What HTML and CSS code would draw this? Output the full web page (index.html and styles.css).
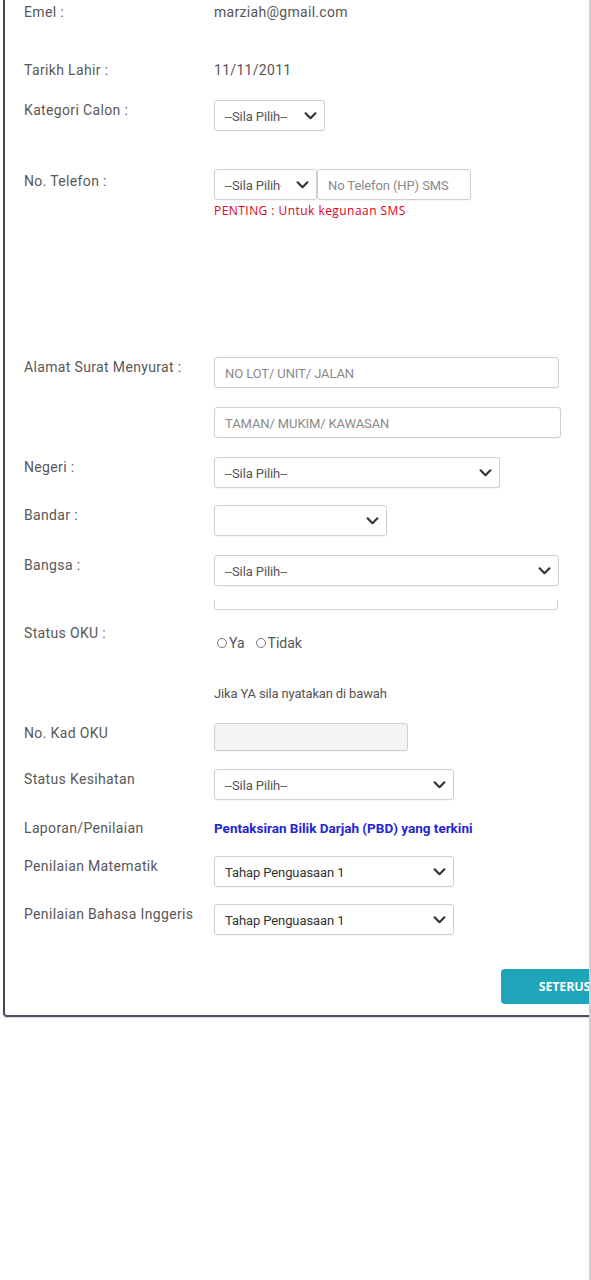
FILE: index.html
```html
<!DOCTYPE html>
<html lang="ms">
<head>
<meta charset="utf-8">
<title>Borang</title>
<link rel="stylesheet" href="styles.css">
</head>
<body>
<div class="viewport">
  <div class="card">
    <div class="row r-emel">
      <div class="label">Emel :</div>
      <div class="value text">marziah@gmail.com</div>
    </div>
    <div class="row r-tarikh">
      <div class="label">Tarikh Lahir :</div>
      <div class="value text">11/11/2011</div>
    </div>
    <div class="row r-kategori">
      <div class="label">Kategori Calon :</div>
      <div class="value">
        <div class="select w-kategori"><span>--Sila Pilih--</span><svg class="chev" viewBox="0 0 14 9"><polyline points="1.5,1.5 7,7 12.5,1.5"/></svg></div>
      </div>
    </div>
    <div class="row r-telefon">
      <div class="label lbl-down">No. Telefon :</div>
      <div class="value">
        <div class="phone">
          <div class="select w-kod"><span class="clip">--Sila Pilih--</span><svg class="chev" viewBox="0 0 14 9"><polyline points="1.5,1.5 7,7 12.5,1.5"/></svg></div>
          <div class="input w-phone"><span class="ph">No Telefon (HP) SMS</span></div>
        </div>
        <div class="note">PENTING : Untuk kegunaan SMS</div>
      </div>
    </div>
    <div class="row r-alamat">
      <div class="label">Alamat Surat Menyurat :</div>
      <div class="value stack">
        <div class="input w-alamat1"><span class="ph">NO LOT/ UNIT/ JALAN</span></div>
        <div class="input w-alamat2"><span class="ph">TAMAN/ MUKIM/ KAWASAN</span></div>
      </div>
    </div>
    <div class="row r-negeri">
      <div class="label">Negeri :</div>
      <div class="value">
        <div class="select w-negeri"><span>--Sila Pilih--</span><svg class="chev" viewBox="0 0 14 9"><polyline points="1.5,1.5 7,7 12.5,1.5"/></svg></div>
      </div>
    </div>
    <div class="row r-bandar">
      <div class="label">Bandar :</div>
      <div class="value">
        <div class="select w-bandar"><span></span><svg class="chev" viewBox="0 0 14 9"><polyline points="1.5,1.5 7,7 12.5,1.5"/></svg></div>
      </div>
    </div>
    <div class="row r-bangsa">
      <div class="label">Bangsa :</div>
      <div class="value">
        <div class="select w-bangsa"><span>--Sila Pilih--</span><svg class="chev" viewBox="0 0 14 9"><polyline points="1.5,1.5 7,7 12.5,1.5"/></svg></div>
      </div>
    </div>
    <div class="row r-cut">
      <div class="label"></div>
      <div class="value"><div class="cut-edge"></div></div>
    </div>
    <div class="row r-oku">
      <div class="label">Status OKU :</div>
      <div class="value radios">
        <label class="radio"><span class="dot"></span>Ya</label>
        <label class="radio"><span class="dot"></span>Tidak</label>
      </div>
    </div>
    <div class="row r-jika">
      <div class="label"></div>
      <div class="value jika">Jika YA sila nyatakan di bawah</div>
    </div>
    <div class="row r-kad">
      <div class="label">No. Kad OKU</div>
      <div class="value"><div class="input disabled w-kad"></div></div>
    </div>
    <div class="row r-kesihatan">
      <div class="label">Status Kesihatan</div>
      <div class="value">
        <div class="select w-mid"><span>--Sila Pilih--</span><svg class="chev" viewBox="0 0 14 9"><polyline points="1.5,1.5 7,7 12.5,1.5"/></svg></div>
      </div>
    </div>
    <div class="row r-laporan">
      <div class="label">Laporan/Penilaian</div>
      <div class="value"><a class="link" href="#">Pentaksiran Bilik Darjah (PBD) yang terkini</a></div>
    </div>
    <div class="row r-mat">
      <div class="label">Penilaian Matematik</div>
      <div class="value">
        <div class="select w-mid dark"><span>Tahap Penguasaan 1</span><svg class="chev" viewBox="0 0 14 9"><polyline points="1.5,1.5 7,7 12.5,1.5"/></svg></div>
      </div>
    </div>
    <div class="row r-bi">
      <div class="label">Penilaian Bahasa Inggeris</div>
      <div class="value">
        <div class="select w-mid dark"><span>Tahap Penguasaan 1</span><svg class="chev" viewBox="0 0 14 9"><polyline points="1.5,1.5 7,7 12.5,1.5"/></svg></div>
      </div>
    </div>
    <div class="actions">
      <button class="btn" type="button">SETERUS</button>
    </div>
  </div>
</div>
</body>
</html>
```
FILE: styles.css
```css
* { box-sizing: border-box; }
html, body { margin: 0; padding: 0; background: #fff; }
body { font-family: Roboto, "Liberation Sans", Arial, sans-serif; color: #555; }

.viewport {
  width: 591px;
  min-height: 1280px;
  overflow: hidden;
  border-right: 2px solid #cfcfcf;
}

.card {
  width: 645px;
  margin-left: 3px;
  padding: 2px 20px 11px 19px;
  border-left: 2px solid #3f4654;
  border-bottom: 2px solid #4a5160;
  border-bottom-left-radius: 4px;
  box-shadow: 0 1px 1px rgba(120, 130, 150, 0.35);
}

.row { display: flex; align-items: flex-start; }
.label {
  width: 190px;
  flex: none;
  font-size: 14px;
  line-height: 20px;
  color: #585858;
  letter-spacing: 0.35px;
}
.lbl-down { padding-top: 2px; }
.value { flex: none; }
.text { font-size: 14px; line-height: 20px; color: #555; letter-spacing: 0.3px; }
.jika { font-size: 13px; line-height: 20px; color: #555; letter-spacing: -0.15px; }

.r-tarikh { margin-top: 38px; }
.r-kategori { margin-top: 20px; }
.r-telefon { margin-top: 38px; }
.r-alamat { margin-top: 139px; }
.r-negeri { margin-top: 19px; }
.r-bandar { margin-top: 17px; }
.r-bangsa { margin-top: 19px; }
.r-cut { margin-top: 14px; }
.r-oku { margin-top: 13px; }
.r-jika { margin-top: 31px; }
.r-kad { margin-top: 19px; }
.r-kesihatan { margin-top: 18px; }
.r-laporan { margin-top: 18px; }
.r-mat { margin-top: 18px; }
.r-bi { margin-top: 17px; }

.select, .input {
  height: 31px;
  border: 1px solid #cfcfcf;
  border-radius: 3px;
  background: #fff;
  display: flex;
  align-items: center;
  padding-left: 10px;
  padding-top: 1px;
  font-size: 13px;
  color: #555;
  box-shadow: 0 1px 1px rgba(0, 0, 0, 0.04);
}
.select { justify-content: space-between; padding-right: 6px; }
.select span { white-space: nowrap; overflow: hidden; letter-spacing: -0.1px; }
.select.dark { color: #333; }
.chev { width: 13px; height: 8px; flex: none; margin-right: 1px; }
.chev polyline { fill: none; stroke: #333; stroke-width: 2.4; stroke-linecap: round; stroke-linejoin: round; }
.ph { color: #8a8a8a; letter-spacing: -0.1px; white-space: nowrap; }

.w-kategori { width: 111px; }
.w-kod { width: 103px; }
.w-kod .clip { width: 56px; }
.w-phone { width: 154px; }
.phone { display: flex; }
.w-alamat1 { width: 345px; }
.w-alamat2 { width: 347px; margin-top: 19px; }
.w-negeri { width: 286px; }
.w-bandar { width: 173px; }
.w-bangsa { width: 345px; }
.w-mid { width: 240px; }
.w-kad { width: 194px; height: 28px; }
.disabled { background: #f3f3f3; }
.stack { display: flex; flex-direction: column; }

.note {
  margin-top: 4px;
  font-family: "Open Sans", "Liberation Sans", sans-serif;
  font-size: 12px;
  line-height: 14px;
  color: #e0001b;
  letter-spacing: 0.45px;
}

.cut-edge {
  width: 344px;
  height: 10px;
  border: 1px solid #d2d2d2;
  border-top: none;
  border-radius: 0 0 3px 3px;
}

.radios { display: flex; gap: 11px; padding-top: 10px; font-size: 14px; line-height: 20px; color: #555; padding-left: 3px; }
.radio { display: flex; align-items: center; gap: 2px; }
.dot { width: 10px; height: 10px; border: 1px solid #777; border-radius: 50%; display: inline-block; }

.link {
  font-size: 13.5px;
  line-height: 20px;
  font-weight: 700;
  color: #2424d6;
  text-decoration: none;
  letter-spacing: 0;
}

.actions { display: flex; justify-content: flex-end; margin-top: 34px; }
.btn {
  width: 127px;
  height: 35px;
  border: none;
  border-radius: 4px;
  background: #1ea5b9;
  color: #fff;
  font-family: "Open Sans", "Liberation Sans", sans-serif;
  font-weight: 700;
  font-size: 12.5px;
  letter-spacing: -0.2px;
  padding: 0;
}
```
